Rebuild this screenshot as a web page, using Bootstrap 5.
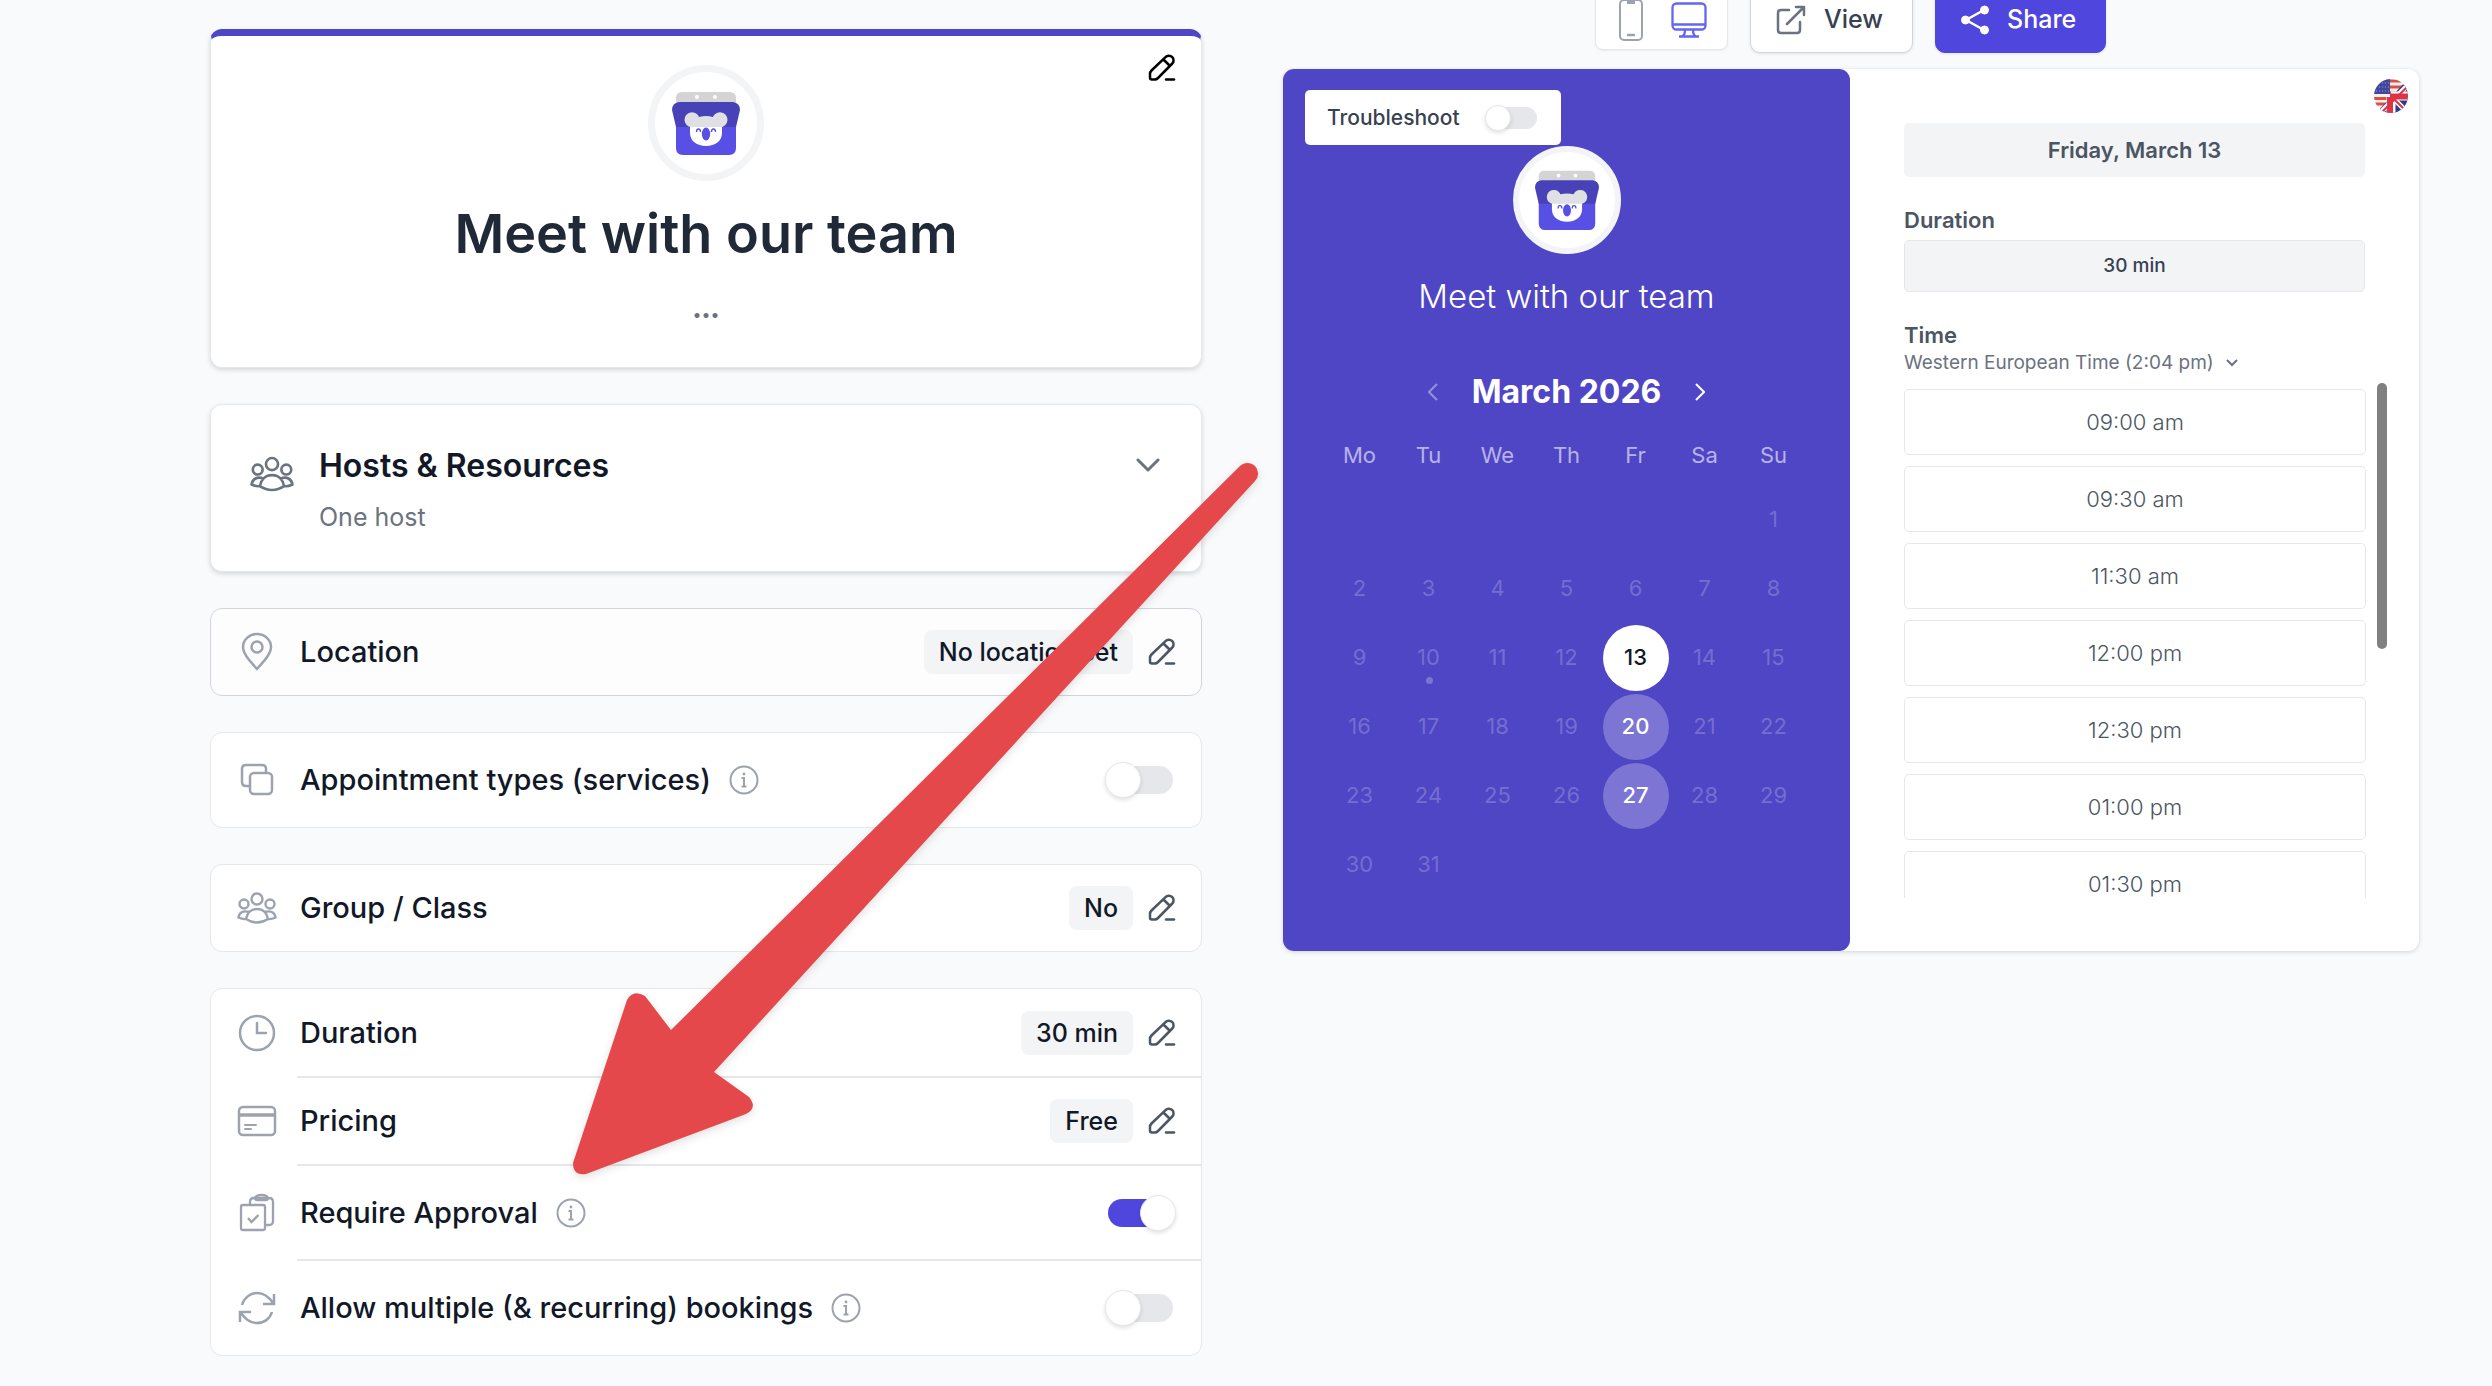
<!DOCTYPE html>
<html lang="en">
<head>
<meta charset="utf-8">
<meta name="viewport" content="width=device-width, initial-scale=1">
<title>Meet with our team</title>
<link href="https://cdn.jsdelivr.net/npm/bootstrap@5.3.0/dist/css/bootstrap.min.css" rel="stylesheet">
<style>
body{background:#f9fafc;font-family:Inter,"Liberation Sans",sans-serif;color:#111827;min-height:100vh;overflow:hidden}
svg{display:block;flex:none}
.page{padding:0 73px 0 210px;gap:81px}
.settings{flex:992 1 0;min-width:0;padding-top:29px;gap:36px}
.preview{flex:1136 1 0;min-width:0}
.panel{background:#fff;border:1px solid #e5e7eb;border-radius:12px}
.raised{box-shadow:0 2px 5px rgba(0,0,0,.14)}
.hero{border-top:7px solid #4f46c5;min-height:339px;padding-top:29px}
.avatar{width:116px;height:116px;border:7px solid #f3f4f6;border-radius:50%;background:#fff}
.avatar svg{width:68px;height:68px}
.hero h1{font-size:54px;font-weight:600;line-height:64px;margin:21px 0 0;color:#1f2937}
.more-dots{font-size:16px;line-height:32px;color:#6b7280;margin-top:32px}
.bare{background:none;border:0;padding:0;color:#4b5563}
.hero .bare{position:absolute;top:18px;right:25px;color:#000}
.hosts{min-height:168px;padding:37px 41px 0 39px;gap:25px}
.hosts h2{font-size:32px;font-weight:600;line-height:48px;margin:0}
.hosts p{font-size:25px;line-height:32px;margin:11px 0 0;color:#6b7280}
.item{min-height:86px;padding:0 25px 0 26px;color:#111827}
.item.tall{min-height:94px}
.item.short{min-height:88px}
.item.group{min-height:95px}
.item .name{font-size:29px;font-weight:500;line-height:40px;margin-left:23px}
.item > svg{color:#9ca3af}
.tip{color:#9ca3af;margin-left:18px}
.pill{background:#f3f4f6;border-radius:8px;font-size:25px;font-weight:500;line-height:44px;padding:0 15px;margin-right:15px}
.located{background:#fdfdfe;border-color:#d1d5db}
.parted{position:relative}
.parted::after{content:"";position:absolute;left:86px;right:0;bottom:-1px;height:2px;background:#e5e7eb}
.knob{appearance:none;position:relative;width:68px;height:36px;margin:0 3px 0 0;background:none;flex:none}
.knob::before{content:"";position:absolute;inset:4px 0 4px 4px;border-radius:14px;background:#e5e7eb}
.knob::after{content:"";position:absolute;left:0;top:0;width:36px;height:36px;border-radius:50%;background:#fff;border:1px solid #e5e7eb;box-shadow:0 2px 4px rgba(0,0,0,.12)}
.knob:checked{margin-right:0}
.knob:checked::before{background:#4f46de;inset:4px 4px 4px 0}
.knob:checked::after{left:auto;right:0}
.knob.mini{width:52px;height:26px;margin:0}
.knob.mini::before{inset:2px 0 2px 2px}
.knob.mini::after{width:26px;height:26px}
.tools{margin-top:-13px;gap:22px;padding-left:312px;height:66px}
.devices{height:60px;background:#fff;border:1px solid #e5e7eb;border-radius:8px;padding:0 20px 0 23px;gap:28px;box-shadow:0 1px 2px rgba(0,0,0,.06)}
.act{height:66px;border-radius:10px;font-size:25px;font-weight:500;padding:0 29px 0 25px;gap:18px;box-shadow:0 1px 3px rgba(0,0,0,.1)}
.view,.view:hover{background:#fff;border:1px solid #d1d5db;color:#374151}
.share,.share:hover{background:#4f46de;border:1px solid #4f46de;color:#fff}
.booking{margin-top:16px;min-height:882px;background:#fff;border-radius:11px;box-shadow:0 1px 4px rgba(0,0,0,.16)}
.cal{background:#4f46c5;border-radius:11px;color:#fff;padding:77px 42px 0;flex:1 1 0;min-width:0;position:relative}
.trouble{position:absolute;left:22px;top:21px;width:256px;height:55px;background:#fff;border-radius:5px;color:#374151;font-size:21px;font-weight:500;padding:0 24px 0 22px}
.cal .avatar{width:108px;height:108px;border:6px solid #f3f4f6;margin:0 auto}
.cal .avatar svg{width:64px;height:64px}
.cal h2{font-size:33px;font-weight:300;line-height:40px;margin:22px 0 0;text-align:center}
.month{margin-top:56px;gap:34px}
.month h3{font-size:32px;font-weight:700;line-height:40px;margin:0}
.month .bare{color:#fff}
.month .bare:disabled{opacity:.4}
.days{width:100%;margin:27px 0 0;table-layout:fixed;border-collapse:collapse;text-align:center;font-size:22px;color:rgba(255,255,255,.22)}
.days th{font-weight:400;height:34px;padding:0;color:rgba(255,255,255,.6)}
.days td{height:69px;padding:0;position:relative;vertical-align:middle}
.days thead tr{height:46px;vertical-align:top}
.days .today::after{content:"";position:absolute;left:50%;bottom:8px;width:7px;height:7px;margin-left:-3px;border-radius:50%;background:rgba(255,255,255,.25)}
.day{width:66px;height:66px;border:0;border-radius:50%;background:rgba(255,255,255,.26);color:#fff;font-weight:500;padding:0;display:block;margin:0 auto}
.day.picked{background:#fff;color:#111827}
.times{flex:1 1 0;min-width:0;padding:54px 32px 0 54px;position:relative;color:#4b5563}
.flag{position:absolute;right:11px;top:10px}
.box{background:#f3f4f6;border-radius:5px;text-align:center;margin-right:22px}
.date{font-size:22px;font-weight:600;line-height:54px}
.mins{font-size:19px;font-weight:500;line-height:50px;border:1px solid #e5e7eb;color:#374151;margin-top:6px}
.times h4{font-size:22px;font-weight:600;line-height:28px;margin:29px 0 0}
.zone{font-size:19px;line-height:28px;color:#6b7280;gap:12px}
.pick{gap:11px;margin-top:6px}
.slots{height:515px;overflow:hidden;gap:11px;padding-top:6px;flex:1}
.slot{height:66px;flex:none;background:#fff;border:1px solid #e5e7eb;border-radius:5px;font-size:22px;font-weight:300;color:#4b5563;padding:0}
.bar{width:10px;height:266px;border-radius:5px;background:#808080}
.arrow{position:absolute;left:560px;top:450px;filter:drop-shadow(0 3px 4px rgba(0,0,0,.12));pointer-events:none}
</style>
<script src="https://cdn.jsdelivr.net/npm/bootstrap@5.3.0/dist/js/bootstrap.bundle.min.js"></script>
</head>
<body>
<svg width="0" height="0" class="position-absolute" aria-hidden="true">
<symbol id="koala" viewBox="0 0 68 68"><path d="M4 16V9q0-6 6-6h48q6 0 6 6v7z" fill="#d4d4d4"/><circle cx="25" cy="8" r="2" fill="#fff"/><circle cx="43" cy="8" r="2" fill="#fff"/><path d="M4 34h60v25q0 7-7 7H11q-7 0-7-7z" fill="#5850e4"/><path d="M7 13h54q7 1 7 8l-4 17H4L0 21q0-7 7-8z" fill="#4842b8"/><path d="M18 36h32v8c0 8-7 13-16 13s-16-5-16-13z" fill="#fff"/><path d="M18 38a7.500 7.500 0 1 1 9-10q7-2 14 0a7.500 7.500 0 1 1 9 10z" fill="#dfe0e4"/><ellipse cx="34" cy="45" rx="4.200" ry="6.500" fill="#5850e4"/><path d="M24.500 43q0-3 2-3t2 3M39.500 43q0-3 2-3t2 3" fill="none" stroke="#5850e4" stroke-width="1.400"/></symbol>
<symbol id="people" viewBox="0 0 40 32"><g fill="none" stroke="currentColor" stroke-width="2.400"><circle cx="20" cy="7" r="5.500"/><circle cx="7" cy="12" r="4.500"/><circle cx="33" cy="12" r="4.500"/><path d="M9 27c1-6 5-10 11-10s10 4 11 10c-3 2-7 3.500-11 3.500S12 29 9 27zM12 20c-6-2-10 1-10.500 5.500q4 2 7.500 1.500M28 20c6-2 10 1 10.500 5.500q-4 2-7.500 1.500"/></g></symbol>
<symbol id="pen" viewBox="0 0 28 28"><g fill="none" stroke="currentColor" stroke-width="2.500" stroke-linejoin="round" stroke-linecap="round"><path d="M4 25.500q-2 0-2-2V20q0-2 1.500-3.500L17.500 3.200a4.600 4.600 0 0 1 6.800 6.300L10 24q-1.500 1.500-3 1.500zM15.500 5.500l6.500 6.500"/><path d="M18 25.500h8"/></g></symbol>
<symbol id="info" viewBox="0 0 30 30"><g fill="none" stroke="currentColor" stroke-width="2"><circle cx="15" cy="15" r="13.500"/><path d="M12.500 13H15v8M12.500 21.500h5"/></g><circle cx="15" cy="9" r="1.400" fill="currentColor"/></symbol>
</svg>
<main class="page d-flex align-items-start">
<section class="settings d-flex flex-column">
<div class="panel raised hero position-relative d-flex flex-column align-items-center">
<button class="bare" type="button" aria-label="Edit"><svg width="28" height="28"><use href="#pen"/></svg></button>
<div class="avatar d-flex align-items-center justify-content-center"><svg><use href="#koala"/></svg></div>
<h1>Meet with our team</h1><div class="more-dots">•••</div>
</div>
<div class="panel raised hosts d-flex align-items-start">
<svg class="mt-2" width="44" height="48" color="#6b7280"><use href="#people"/></svg>
<div class="flex-grow-1"><h2>Hosts &amp; Resources</h2><p>One host</p></div>
<button class="bare mt-3" type="button" aria-label="Expand"><svg width="24" height="16" viewBox="0 0 24 16" fill="none" stroke="#6b7280" stroke-width="3" stroke-linecap="round" stroke-linejoin="round"><path d="M2 2l10 10L22 2"/></svg></button>
</div>
<div class="panel located"><div class="item d-flex align-items-center">
<svg width="40" height="40" viewBox="0 0 40 40" fill="none" stroke="currentColor" stroke-width="2.500"><path d="M20 37C11 27 6 21 6 15a14 13 0 0 1 28 0c0 6-5 12-14 22z"/><circle cx="20" cy="15" r="5.500"/></svg>
<span class="name flex-grow-1">Location</span><span class="pill">No location set</span><button class="bare" type="button" aria-label="Edit location"><svg width="28" height="28"><use href="#pen"/></svg></button></div></div>
<div class="panel"><div class="item tall d-flex align-items-center">
<svg width="40" height="40" viewBox="0 0 40 40" fill="none" stroke="currentColor" stroke-width="2.500"><path d="M13 26h-4q-4 0-4-4V9q0-4 4-4h16q4 0 4 4v4"/><rect x="13" y="13" width="22" height="21" rx="4"/></svg>
<label class="name" for="types">Appointment types (services)</label><svg class="tip me-auto" width="30" height="30"><use href="#info"/></svg><input class="knob" type="checkbox" role="switch" id="types"></div></div>
<div class="panel"><div class="item d-flex align-items-center">
<svg width="40" height="36"><use href="#people"/></svg>
<span class="name flex-grow-1">Group / Class</span><span class="pill">No</span><button class="bare" type="button" aria-label="Edit group"><svg width="28" height="28"><use href="#pen"/></svg></button></div></div>
<div class="panel">
<div class="item short parted d-flex align-items-center">
<svg width="40" height="40" viewBox="0 0 40 40" fill="none" stroke="currentColor" stroke-width="2.500"><circle cx="20" cy="20" r="17"/><path d="M20 10v10h9" stroke-linecap="round"/></svg>
<span class="name flex-grow-1">Duration</span><span class="pill">30 min</span><button class="bare" type="button" aria-label="Edit duration"><svg width="28" height="28"><use href="#pen"/></svg></button></div>
<div class="item short parted d-flex align-items-center">
<svg width="40" height="40" viewBox="0 0 40 40" fill="none" stroke="currentColor" stroke-width="2.500"><rect x="2" y="6" width="36" height="28" rx="4"/><path d="M2 14h36" stroke-width="3.500"/><path d="M8 24h11M8 28h6" stroke-width="2" stroke-linecap="round"/></svg>
<span class="name flex-grow-1">Pricing</span><span class="pill">Free</span><button class="bare" type="button" aria-label="Edit pricing"><svg width="28" height="28"><use href="#pen"/></svg></button></div>
<div class="item parted group d-flex align-items-center">
<svg width="40" height="40" viewBox="0 0 40 40" fill="none" stroke="currentColor" stroke-width="2.300"><rect x="4" y="12" width="24" height="25" rx="2"/><path d="M13 12V9q0-4 4-4h15q4 0 4 4v19q0 4-4 4h-4"/><path d="M18 5c1-3 4-3 6.500-3S30 2 31 5q0 2-2 2h-9q-2 0-2-2z"/><path d="M11 25l3.500 4 7-7"/></svg>
<label class="name" for="approval">Require Approval</label><svg class="tip me-auto" width="30" height="30"><use href="#info"/></svg><input class="knob" type="checkbox" role="switch" id="approval" checked></div>
<div class="item group d-flex align-items-center">
<svg width="40" height="40" viewBox="0 0 40 40" fill="none" stroke="currentColor" stroke-width="2.500"><path d="M5 17c2-7 8-12 15-12s12 4 16 10M37 6v10H26M35 24c-2 7-8 11-15 11S8 31 4 25M3 34V24h11"/></svg>
<label class="name" for="multi">Allow multiple (&amp; recurring) bookings</label><svg class="tip me-auto" width="30" height="30"><use href="#info"/></svg><input class="knob" type="checkbox" role="switch" id="multi"></div>
</div>
</section>
<section class="preview">
<div class="tools d-flex align-items-center">
<div class="devices d-flex align-items-center">
<button class="bare" type="button" aria-label="Phone"><svg width="24" height="42" viewBox="0 0 24 42" fill="none" stroke="#9ca3af" stroke-width="2"><rect x="1" y="1" width="22" height="40" rx="4"/><path d="M8 2.500h8" stroke-width="5"/><path d="M9 36h6" stroke-width="2.500" stroke-linecap="round"/></svg></button>
<button class="bare" type="button" aria-label="Desktop"><svg width="36" height="36" viewBox="0 0 36 36" fill="none" stroke="#6366f1" stroke-width="2.300"><rect x="1.500" y="1.500" width="33" height="26" rx="4"/><path d="M1.500 22.500h33M14 28q0 5-3 6.500M22 28q0 5 3 6.500M8 34.500h20"/></svg></button></div>
<button class="btn act view d-flex align-items-center" type="button"><svg width="30" height="30" viewBox="0 0 30 30" fill="none" stroke="#6b7280" stroke-width="2.500" stroke-linecap="round" stroke-linejoin="round"><path d="M13 5H5q-3 0-3 3v17q0 3 3 3h16q3 0 3-3v-8M20 2h8v8M27 3L11 19"/></svg>View</button>
<button class="btn act share d-flex align-items-center" type="button"><svg width="28" height="30" viewBox="0 0 28 30" fill="#fff" stroke="#fff"><path d="M23 5L5 15l18 10" fill="none" stroke-width="2.500"/><circle cx="23.500" cy="5" r="4"/><circle cx="4.500" cy="15" r="4"/><circle cx="23.500" cy="25" r="4"/></svg>Share</button>
</div>
<div class="booking d-flex">
<div class="cal">
<div class="trouble d-flex align-items-center justify-content-between"><label for="trouble">Troubleshoot</label><input class="knob mini" type="checkbox" role="switch" id="trouble"></div>
<div class="avatar d-flex align-items-center justify-content-center"><svg><use href="#koala"/></svg></div>
<h2>Meet with our team</h2>
<div class="month d-flex align-items-center justify-content-center"><button class="bare" type="button" disabled aria-label="Previous month"><svg width="10" height="18" viewBox="0 0 10 18" fill="none" stroke="currentColor" stroke-width="2"><path d="M9 1L1 9l8 8"/></svg></button><h3>March 2026</h3><button class="bare" type="button" aria-label="Next month"><svg width="10" height="18" viewBox="0 0 10 18" fill="none" stroke="currentColor" stroke-width="2"><path d="M1 1l8 8-8 8"/></svg></button></div>
<table class="days"><thead><tr><th>Mo</th><th>Tu</th><th>We</th><th>Th</th><th>Fr</th><th>Sa</th><th>Su</th></tr></thead>
<tbody><tr><td></td><td></td><td></td><td></td><td></td><td></td><td>1</td></tr>
<tr><td>2</td><td>3</td><td>4</td><td>5</td><td>6</td><td>7</td><td>8</td></tr>
<tr><td>9</td><td class="today">10</td><td>11</td><td>12</td><td><button class="day picked" type="button">13</button></td><td>14</td><td>15</td></tr>
<tr><td>16</td><td>17</td><td>18</td><td>19</td><td><button class="day" type="button">20</button></td><td>21</td><td>22</td></tr>
<tr><td>23</td><td>24</td><td>25</td><td>26</td><td><button class="day" type="button">27</button></td><td>28</td><td>29</td></tr>
<tr><td>30</td><td>31</td><td></td><td></td><td></td><td></td><td></td></tr></tbody></table>
</div>
<div class="times">
<svg class="flag" width="34" height="34" viewBox="0 0 34 34"><clipPath id="disc"><circle cx="17" cy="17" r="17"/></clipPath><g clip-path="url(#disc)"><path d="M0 0h34v34H0z" fill="#f4f1f1"/><path d="M16 2h18M16 8h18M16 14h8M0 19.500h20M0 25h13" stroke="#dd4f3e" stroke-width="3"/><path d="M0 0h16v15H0z" fill="#41479b"/><path d="M2 4h13M2 8h13M2 12h13" stroke="#9fa3d6" stroke-width="1" stroke-dasharray="1 2"/><path d="M34 0v34H2z" fill="#2f3b86"/><path d="M34 6L6 34M17 17l17 17" stroke="#fff" stroke-width="5"/><path d="M17 17v17M17 17h17" stroke="#fff" stroke-width="9"/><path d="M16 18v16M16 17.500h18" stroke="#dc3545" stroke-width="6"/><path d="M34 7L7 34M18 18l16 16" stroke="#dc3545" stroke-width="2"/></g></svg>
<div class="box date">Friday, March 13</div>
<h4>Duration</h4><div class="box mins">30 min</div>
<h4>Time</h4>
<button class="bare zone d-flex align-items-center" type="button">Western European Time (2:04 pm)<svg width="12" height="8" viewBox="0 0 12 8" fill="none" stroke="currentColor" stroke-width="2"><path d="M1 1l5 5 5-5"/></svg></button>
<div class="pick d-flex"><div class="slots d-flex flex-column">
<button class="slot" type="button">09:00 am</button><button class="slot" type="button">09:30 am</button><button class="slot" type="button">11:30 am</button><button class="slot" type="button">12:00 pm</button><button class="slot" type="button">12:30 pm</button><button class="slot" type="button">01:00 pm</button><button class="slot" type="button">01:30 pm</button></div><div class="bar"></div></div>
</div>
</div>
</section>
</main>
<svg class="arrow" width="710" height="740" viewBox="560 450 710 740" fill="#e5484b" aria-hidden="true"><path d="M1240 466a10 10 0 0 1 15 15L714 1072l35 25q9 11-3 17L586 1174q-13 2-13-11L627 1000q6-11 18-4l26 34z"/></svg>
</body>
</html>
